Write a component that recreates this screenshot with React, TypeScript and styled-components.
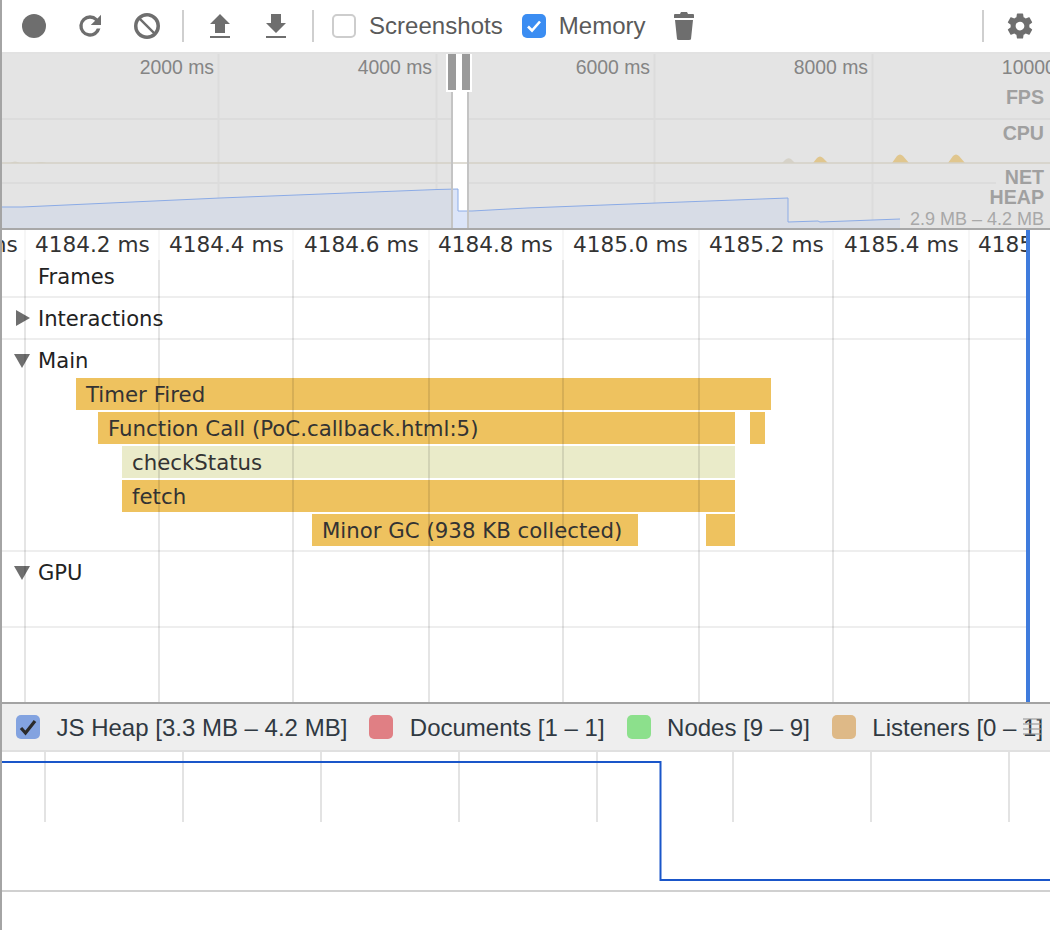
import React from "react";
import styled, { createGlobalStyle } from "styled-components";

const Global = createGlobalStyle`
  html, body { margin: 0; padding: 0; background: #fff; }
  * { box-sizing: border-box; }
`;

const Page = styled.div`
  width: 1050px;
  height: 930px;
  overflow: hidden;
  background: #fff;
  border-left: 2px solid #a4a4a4;
  font-family: "Liberation Sans", Arial, sans-serif;
`;

const Toolbar = styled.div`
  height: 54px;
  display: flex;
  align-items: center;
  padding: 0 2px 0 4px;
  border-bottom: 2px solid #e2e2e2;
  color: #6e6e6e;
`;
const IconButton = styled.div<{ $l?: number }>`
  width: 56px;
  height: 52px;
  flex: none;
  margin-left: ${(p) => p.$l ?? 0}px;
  display: flex;
  align-items: center;
  justify-content: center;
  svg { display: block; fill: #6e6e6e; }
`;
const Separator = styled.div<{ $l: number; $r: number }>`
  width: 2px;
  height: 32px;
  background: #cfcfcf;
  flex: none;
  margin: 0 ${(p) => p.$r}px 0 ${(p) => p.$l}px;
`;
const Check = styled.label<{ $l: number }>`
  display: flex;
  align-items: center;
  gap: 13px;
  margin-left: ${(p) => p.$l}px;
  font-size: 24px;
  letter-spacing: 0.03px;
  color: #5a5a5a;
`;
const Box = styled.span<{ $on?: boolean }>`
  width: 24px;
  height: 24px;
  border-radius: 5px;
  flex: none;
  display: flex;
  align-items: center;
  justify-content: center;
  background: ${(p) => (p.$on ? "#3b8df2" : "#fff")};
  border: ${(p) => (p.$on ? "none" : "2px solid #cdcdcd")};
`;
const Spacer = styled.div`
  flex: 1;
`;

const Overview = styled.div`
  position: relative;
  height: 176px;
  background: #e4e4e4;
  border-bottom: 2px solid #a8a8a8;
  overflow: hidden;
`;
const OverviewChart = styled.svg`
  position: absolute;
  left: 0;
  top: 0;
  display: block;
`;
const TickLabel = styled.span<{ $right: number }>`
  position: absolute;
  top: 2px;
  right: ${(p) => p.$right}px;
  font-size: 19.4px;
  line-height: 22px;
  color: #858585;
  white-space: nowrap;
`;
const RowLabel = styled.span<{ $top: number }>`
  position: absolute;
  right: 6px;
  top: ${(p) => p.$top}px;
  font-size: 19.6px;
  line-height: 22px;
  font-weight: 700;
  color: #a0a0a0;
  white-space: nowrap;
`;
const HeapRange = styled.span`
  position: absolute;
  right: 6px;
  top: 154px;
  font-size: 18px;
  line-height: 22px;
  color: #a8a8a8;
  background: #e4e4e4;
  white-space: nowrap;
`;

const Timeline = styled.div`
  position: relative;
  height: 472px;
  overflow: hidden;
  font-family: "DejaVu Sans", sans-serif;
`;
const GridLine = styled.div<{ $x: number }>`
  position: absolute;
  top: 0;
  bottom: 0;
  left: ${(p) => p.$x}px;
  width: 2px;
  z-index: 2;
  background: linear-gradient(
    to bottom,
    rgba(0, 0, 0, 0.035) 0,
    rgba(0, 0, 0, 0.035) 30px,
    rgba(0, 0, 0, 0.1) 30px
  );
`;
const Cursor = styled.div`
  position: absolute;
  top: 0;
  bottom: 0;
  right: 0;
  width: 24px;
  z-index: 3;
  background: #fff;
  border-left: 4px solid #3f7bdc;
`;
const Ruler = styled.div`
  position: relative;
  height: 30px;
`;
const RulerLabel = styled.span<{ $x: number }>`
  position: absolute;
  top: 0;
  left: ${(p) => p.$x}px;
  font-size: 21.6px;
  line-height: 30px;
  color: #333;
  white-space: nowrap;
`;
const Track = styled.div<{ $h: number; $last?: boolean }>`
  position: relative;
  height: ${(p) => p.$h}px;
  border-bottom: ${(p) => (p.$last ? "none" : "2px solid #eeeeee")};
`;
const TrackLabel = styled.div<{ $lh?: number }>`
  display: flex;
  align-items: center;
  height: ${(p) => p.$lh ?? 40}px;
  padding: 0 0 0 36px;
  font-size: 21.1px;
  color: #222;
  position: relative;
`;
const Arrow = styled.svg<{ $l: number; $t: number }>`
  position: absolute;
  left: ${(p) => p.$l}px;
  top: ${(p) => p.$t}px;
  display: block;
  fill: #6e6e6e;
`;
const Bar = styled.div<{ $x: number; $y: number; $w: number; $kind?: "script" }>`
  position: absolute;
  left: ${(p) => p.$x}px;
  top: ${(p) => p.$y}px;
  width: ${(p) => p.$w}px;
  height: 32px;
  padding: 1px 0 0 10px;
  background: ${(p) => (p.$kind ? "#eaebc9" : "#eec25f")};
  color: #333;
  font-size: 21.3px;
  line-height: 32px;
  white-space: nowrap;
  overflow: hidden;
`;

const Legend = styled.div`
  height: 50px;
  display: flex;
  align-items: center;
  padding-left: 14px;
  background: #eeeeee;
  border-top: 2px solid #a3a3a3;
  border-bottom: 2px solid #e0e0e0;
  position: relative;
  overflow: hidden;
`;
const LegendItem = styled.div`
  display: flex;
  align-items: center;
  gap: 16.5px;
  margin-right: 22px;
  font-size: 24px;
  line-height: 28px;
  color: #303942;
  white-space: nowrap;
`;
const LegendText = styled.span`
  position: relative;
  top: 1px;
`;
const Swatch = styled.span<{ $c: string }>`
  width: 24px;
  height: 24px;
  border-radius: 5px;
  background: ${(p) => p.$c};
  flex: none;
  display: flex;
  align-items: center;
  justify-content: center;
`;
const Ghost = styled.div`
  position: absolute;
  left: 1021px;
  top: 14px;
  width: 19px;
  height: 19px;
  background: repeating-linear-gradient(
    to bottom,
    rgba(150, 150, 150, 0.55) 0,
    rgba(150, 150, 150, 0.55) 2px,
    transparent 2px,
    transparent 5px
  );
`;

const Counters = styled.svg`
  display: block;
`;
const Footer = styled.div`
  height: 38px;
  background: #fff;
`;

const overviewGrid = [216.5, 434.5, 652.5, 870.5];
const overviewTicks = [
  { t: "2000 ms", r: 836 },
  { t: "4000 ms", r: 618 },
  { t: "6000 ms", r: 400 },
  { t: "8000 ms", r: 182 },
  { t: "10000 ms", r: -37 },
];
const grid = [22, 156, 290, 426, 560, 696, 830, 966];
const ruler = [
  { t: "4184.0 ms", x: -99 },
  { t: "4184.2 ms", x: 33 },
  { t: "4184.4 ms", x: 167 },
  { t: "4184.6 ms", x: 302 },
  { t: "4184.8 ms", x: 436 },
  { t: "4185.0 ms", x: 571 },
  { t: "4185.2 ms", x: 707 },
  { t: "4185.4 ms", x: 842 },
  { t: "4185.6 ms", x: 976 },
];
const bars: { t: string; x: number; y: number; w: number; kind?: "script" }[] = [
  { t: "Timer Fired", x: 74, y: 38, w: 695 },
  { t: "Function Call (PoC.callback.html:5)", x: 96, y: 72, w: 637 },
  { t: "", x: 748, y: 72, w: 15 },
  { t: "checkStatus", x: 120, y: 106, w: 613, kind: "script" },
  { t: "fetch", x: 120, y: 140, w: 613 },
  { t: "Minor GC (938 KB collected)", x: 310, y: 174, w: 326 },
  { t: "", x: 704, y: 174, w: 29 },
];
const counterGrid = [43, 181, 319, 457, 595, 731, 869, 1007];

const Overlay = () => (
  <OverviewChart width={1048} height={174} viewBox="0 0 1048 174">
    <path d="M449 0h16v174h-16z" fill="#fff" />
    <g stroke="#dcdcdc" strokeWidth="2" fill="none">
      <path d="M0 65H449M465 65H1048M0 129H449M465 129H994" />
      {overviewGrid.map((x) => (
        <path key={x} d={`M${x} 0V174`} />
      ))}
    </g>
    <path d="M8 109q5-3 10 0zM33 109q6-2 12 0zM780 109l3-3q3-3 6-1l4 4z" fill="#d6d2c8" />
    <path
      d="M811 109l4-5q3-3 6 0l5 5zM890 109l5-7q3-3 6 0l6 7zM946 109l5-7q3-3 6 0l6 7z"
      fill="#e0c68e"
    />
    <path d="M0 109H1048" stroke="#d4d0c6" strokeWidth="1.5" />
    <path
      d="M0 153H20L218 144L435 135.500L456 135V157H470L525 154L654 149L786 144V168L816 167L818 168L898 165V174H0Z"
      fill="#d7dce6"
    />
    <path d="M449 135.300H456V157H465V174H449Z" fill="#dce5f8" />
    <path
      d="M0 153H20L218 144L435 135.500L456 135V157H470L525 154L654 149L786 144V168L816 167L818 168L898 165"
      fill="none"
      stroke="#8babe6"
      strokeWidth="1"
    />
    <path d="M450 38V174M466 38V174" stroke="#c4c4c4" strokeWidth="2" />
    <path d="M444 0H470V38H444Z" fill="#fff" />
    <path d="M446 0H454V36H446ZM460 0H468V36H460Z" fill="#9a9a9a" />
  </OverviewChart>
);

export default function App() {
  return (
    <Page>
      <Global />
      <Toolbar>
        <IconButton>
          <svg width="24" height="24" viewBox="0 0 24 24">
            <circle cx="12" cy="12" r="12" />
          </svg>
        </IconButton>
        <IconButton>
          <svg width="26" height="26" viewBox="0 0 26 26">
            <path d="M20.500 5.500A10.800 10.800 0 0 0 13 2.300 10.700 10.700 0 1 0 23.400 15.500h-3.600A7.300 7.300 0 1 1 13 5.700c2 0 3.800.8 5.100 2.100L13.800 12H24V1.800z" />
          </svg>
        </IconButton>
        <IconButton $l={1}>
          <svg width="28" height="28" viewBox="0 0 28 28">
            <path
              fillRule="evenodd"
              d="M14 1a13 13 0 1 0 0 26 13 13 0 0 0 0-26zM4.500 14c0-2.200.7-4.200 2-5.800l13.300 13.300a9.500 9.500 0 0 1-15.300-7.500zm17-5.800a9.500 9.500 0 0 1 0 11.600L8.200 6.500a9.500 9.500 0 0 1 13.300 1.700z"
            />
          </svg>
        </IconButton>
        <Separator $l={7} $r={8} />
        <IconButton>
          <svg width="20" height="24" viewBox="0 0 20 24">
            <path d="M10 0l10 10h-5v9H5v-9H0zM0 22h20v2H0z" />
          </svg>
        </IconButton>
        <IconButton>
          <svg width="20" height="24" viewBox="0 0 20 24">
            <path d="M5 0h10v9h5L10 19 0 9h5zM0 22h20v2H0z" />
          </svg>
        </IconButton>
        <Separator $l={8} $r={0} />
        <Check $l={18}>
          <Box />
          Screenshots
        </Check>
        <Check $l={19}>
          <Box $on>
            <svg width="18" height="18" viewBox="0 0 18 18">
              <path d="M3 9.500l4 4 8-9" fill="none" stroke="#fff" strokeWidth="2.600" />
            </svg>
          </Box>
          Memory
        </Check>
        <IconButton $l={10}>
          <svg width="20" height="28" viewBox="0 0 20 28">
            <path d="M7 0h6l1 2h5q1 0 1 1v3H0V3q0-1 1-1h5zM1 8h18l-2 19q0 1-2 1H5q-2 0-2-1z" />
          </svg>
        </IconButton>
        <Spacer />
        <Separator $l={0} $r={8} />
        <IconButton>
          <svg width="30" height="30" viewBox="0 0 24 24">
            <path d="M19.430 12.980c.04-.32.07-.64.07-.98s-.03-.66-.07-.98l2.110-1.650c.19-.15.24-.42.12-.64l-2-3.460c-.12-.22-.39-.3-.61-.22l-2.490 1c-.52-.4-1.080-.73-1.690-.98l-.38-2.650C14.460 2.180 14.250 2 14 2h-4c-.25 0-.46.18-.49.42l-.38 2.650c-.61.25-1.170.59-1.690.98l-2.490-1c-.23-.09-.49 0-.61.22l-2 3.460c-.13.22-.07.49.12.64l2.110 1.650c-.04.32-.07.65-.07.98s.03.66.07.98l-2.110 1.650c-.19.15-.24.42-.12.64l2 3.460c.12.22.39.3.61.22l2.490-1c.52.4 1.080.73 1.690.98l.38 2.650c.03.24.24.42.49.42h4c.25 0 .46-.18.49-.42l.38-2.650c.61-.25 1.170-.59 1.690-.98l2.490 1c.23.09.49 0 .61-.22l2-3.460c.12-.22.07-.49-.12-.64l-2.110-1.650zM12 15.500c-1.930 0-3.500-1.570-3.500-3.500s1.570-3.500 3.500-3.500 3.500 1.570 3.500 3.500-1.570 3.500-3.500 3.500z" />
          </svg>
        </IconButton>
      </Toolbar>

      <Overview>
        <Overlay />
        {overviewTicks.map((o) => (
          <TickLabel key={o.t} $right={o.r}>
            {o.t}
          </TickLabel>
        ))}
        <RowLabel $top={32}>FPS</RowLabel>
        <RowLabel $top={68}>CPU</RowLabel>
        <RowLabel $top={112}>NET</RowLabel>
        <RowLabel $top={132}>HEAP</RowLabel>
        <HeapRange>2.9 MB – 4.2 MB</HeapRange>
      </Overview>

      <Timeline>
        {grid.map((x) => (
          <GridLine key={x} $x={x} />
        ))}
        <Cursor />
        <Ruler>
          {ruler.map((r) => (
            <RulerLabel key={r.t} $x={r.x}>
              {r.t}
            </RulerLabel>
          ))}
        </Ruler>
        <Track $h={38}>
          <TrackLabel $lh={32}>Frames</TrackLabel>
        </Track>
        <Track $h={42}>
          <TrackLabel>
            <Arrow width="14" height="16" viewBox="0 0 14 16" $l={14} $t={12}>
              <path d="M0 0L14 8L0 16Z" />
            </Arrow>
            Interactions
          </TrackLabel>
        </Track>
        <Track $h={212}>
          <TrackLabel>
            <Arrow width="16" height="14" viewBox="0 0 16 14" $l={12} $t={14}>
              <path d="M0 0H16L8 14Z" />
            </Arrow>
            Main
          </TrackLabel>
          {bars.map((b) => (
            <Bar key={`${b.x}-${b.y}`} $x={b.x} $y={b.y} $w={b.w} $kind={b.kind}>
              {b.t}
            </Bar>
          ))}
        </Track>
        <Track $h={76}>
          <TrackLabel>
            <Arrow width="16" height="14" viewBox="0 0 16 14" $l={12} $t={14}>
              <path d="M0 0H16L8 14Z" />
            </Arrow>
            GPU
          </TrackLabel>
        </Track>
        <Track $h={74} $last />
      </Timeline>

      <Legend>
        <LegendItem>
          <Swatch $c="#83a3e0">
            <svg width="20" height="20" viewBox="0 0 20 20">
              <path d="M3 11l4.500 5L17 4" fill="none" stroke="#2b2b2b" strokeWidth="3.200" />
            </svg>
          </Swatch>
          <LegendText>JS Heap [3.3 MB – 4.2 MB]</LegendText>
        </LegendItem>
        <LegendItem>
          <Swatch $c="#e07f84" />
          <LegendText>Documents [1 – 1]</LegendText>
        </LegendItem>
        <LegendItem>
          <Swatch $c="#8ce08c" />
          <LegendText>Nodes [9 – 9]</LegendText>
        </LegendItem>
        <LegendItem>
          <Swatch $c="#deb987" />
          <LegendText>Listeners [0 – 1]</LegendText>
        </LegendItem>
        <Ghost />
      </Legend>

      <Counters width={1048} height={140} viewBox="0 0 1048 140">
        <g stroke="#e3e3e3" strokeWidth="2">
          {counterGrid.map((x) => (
            <path key={x} d={`M${x} 0V70`} />
          ))}
        </g>
        <path d="M0 10H658.500V128H1048" fill="none" stroke="#1a56c9" strokeWidth="2" />
        <path d="M0 139H1048" stroke="#d0d0d0" strokeWidth="2" />
      </Counters>
      <Footer />
    </Page>
  );
}
